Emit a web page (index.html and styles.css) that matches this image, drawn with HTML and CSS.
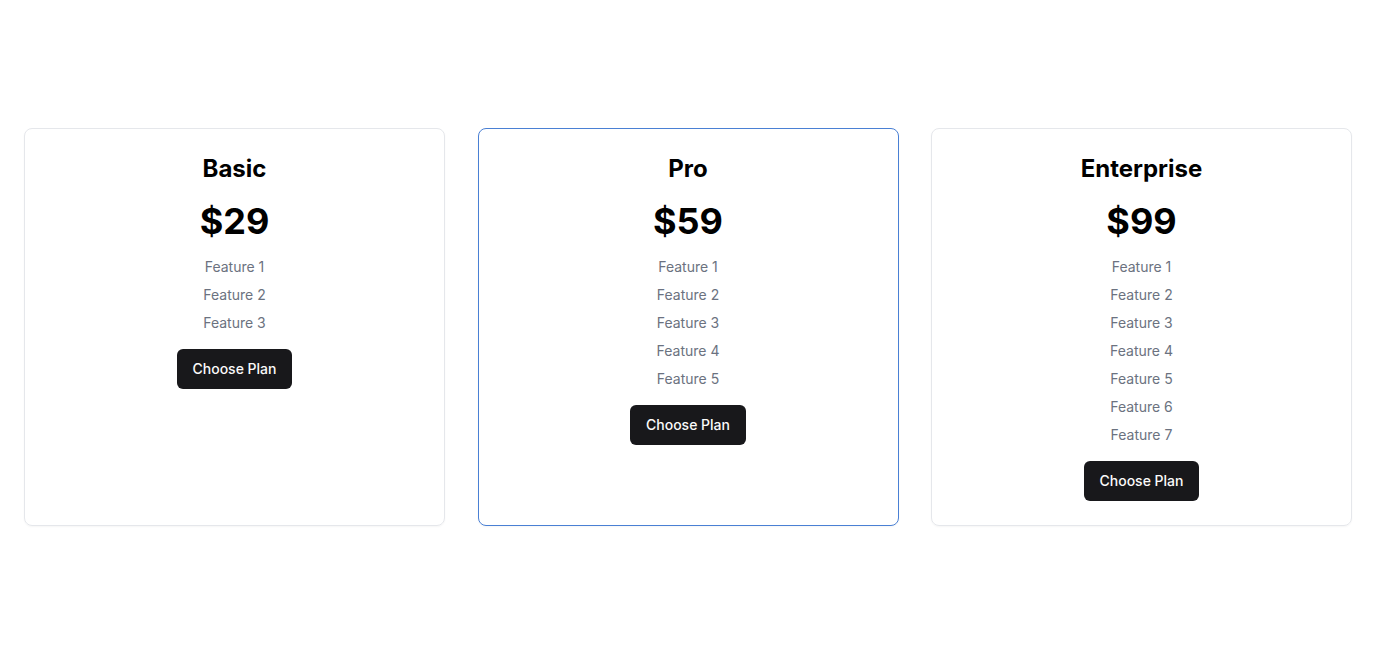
FILE: index.html
```html
<!DOCTYPE html>
<html lang="en">
<head>
<meta charset="utf-8">
<title>Pricing</title>
<link rel="stylesheet" href="styles.css">
</head>
<body>
<main class="pricing">
  <section class="card">
    <h2 class="card-title">Basic</h2>
    <p class="price">$29</p>
    <ul class="features">
      <li>Feature 1</li>
      <li>Feature 2</li>
      <li>Feature 3</li>
    </ul>
    <button class="btn">Choose Plan</button>
  </section>
  <section class="card card-featured">
    <h2 class="card-title">Pro</h2>
    <p class="price">$59</p>
    <ul class="features">
      <li>Feature 1</li>
      <li>Feature 2</li>
      <li>Feature 3</li>
      <li>Feature 4</li>
      <li>Feature 5</li>
    </ul>
    <button class="btn">Choose Plan</button>
  </section>
  <section class="card">
    <h2 class="card-title">Enterprise</h2>
    <p class="price">$99</p>
    <ul class="features">
      <li>Feature 1</li>
      <li>Feature 2</li>
      <li>Feature 3</li>
      <li>Feature 4</li>
      <li>Feature 5</li>
      <li>Feature 6</li>
      <li>Feature 7</li>
    </ul>
    <button class="btn">Choose Plan</button>
  </section>
</main>
</body>
</html>
```
FILE: styles.css
```css
* { box-sizing: border-box; }
html, body { margin: 0; height: 100%; }
body {
  font-family: Inter, "Noto Sans", sans-serif;
  background: #ffffff;
  color: #000;
}
.pricing {
  min-height: 100%;
  display: grid;
  grid-template-columns: repeat(3, 1fr);
  gap: 32.5px;
  align-content: center;
  padding: 0 24px;
}
.card {
  border: 1px solid #e5e7eb;
  border-radius: 8px;
  padding: 23px 24px 24px;
  display: flex;
  flex-direction: column;
  align-items: center;
  box-shadow: 0 1px 2px rgba(0,0,0,0.04);
}
.card-featured { border-color: #4a80d4; }
.card-title {
  margin: 0 0 16px;
  padding-top: 1px;
  font-size: 24px;
  line-height: 32px;
  font-weight: 700;
}
.price {
  margin: 0 0 16px;
  font-size: 36px;
  line-height: 40px;
  font-weight: 700;
}
.features {
  list-style: none;
  margin: 0 0 16px;
  padding: 0;
  display: flex;
  flex-direction: column;
  align-items: center;
  gap: 8px;
}
.features li {
  font-size: 14px;
  line-height: 20px;
  color: #6b7280;
}
.btn {
  font-family: inherit;
  font-size: 14px;
  font-weight: 500;
  line-height: 20px;
  color: #fafafa;
  background: #18181b;
  border: none;
  border-radius: 6px;
  padding: 10px 16px;
  height: 40px;
}
```
